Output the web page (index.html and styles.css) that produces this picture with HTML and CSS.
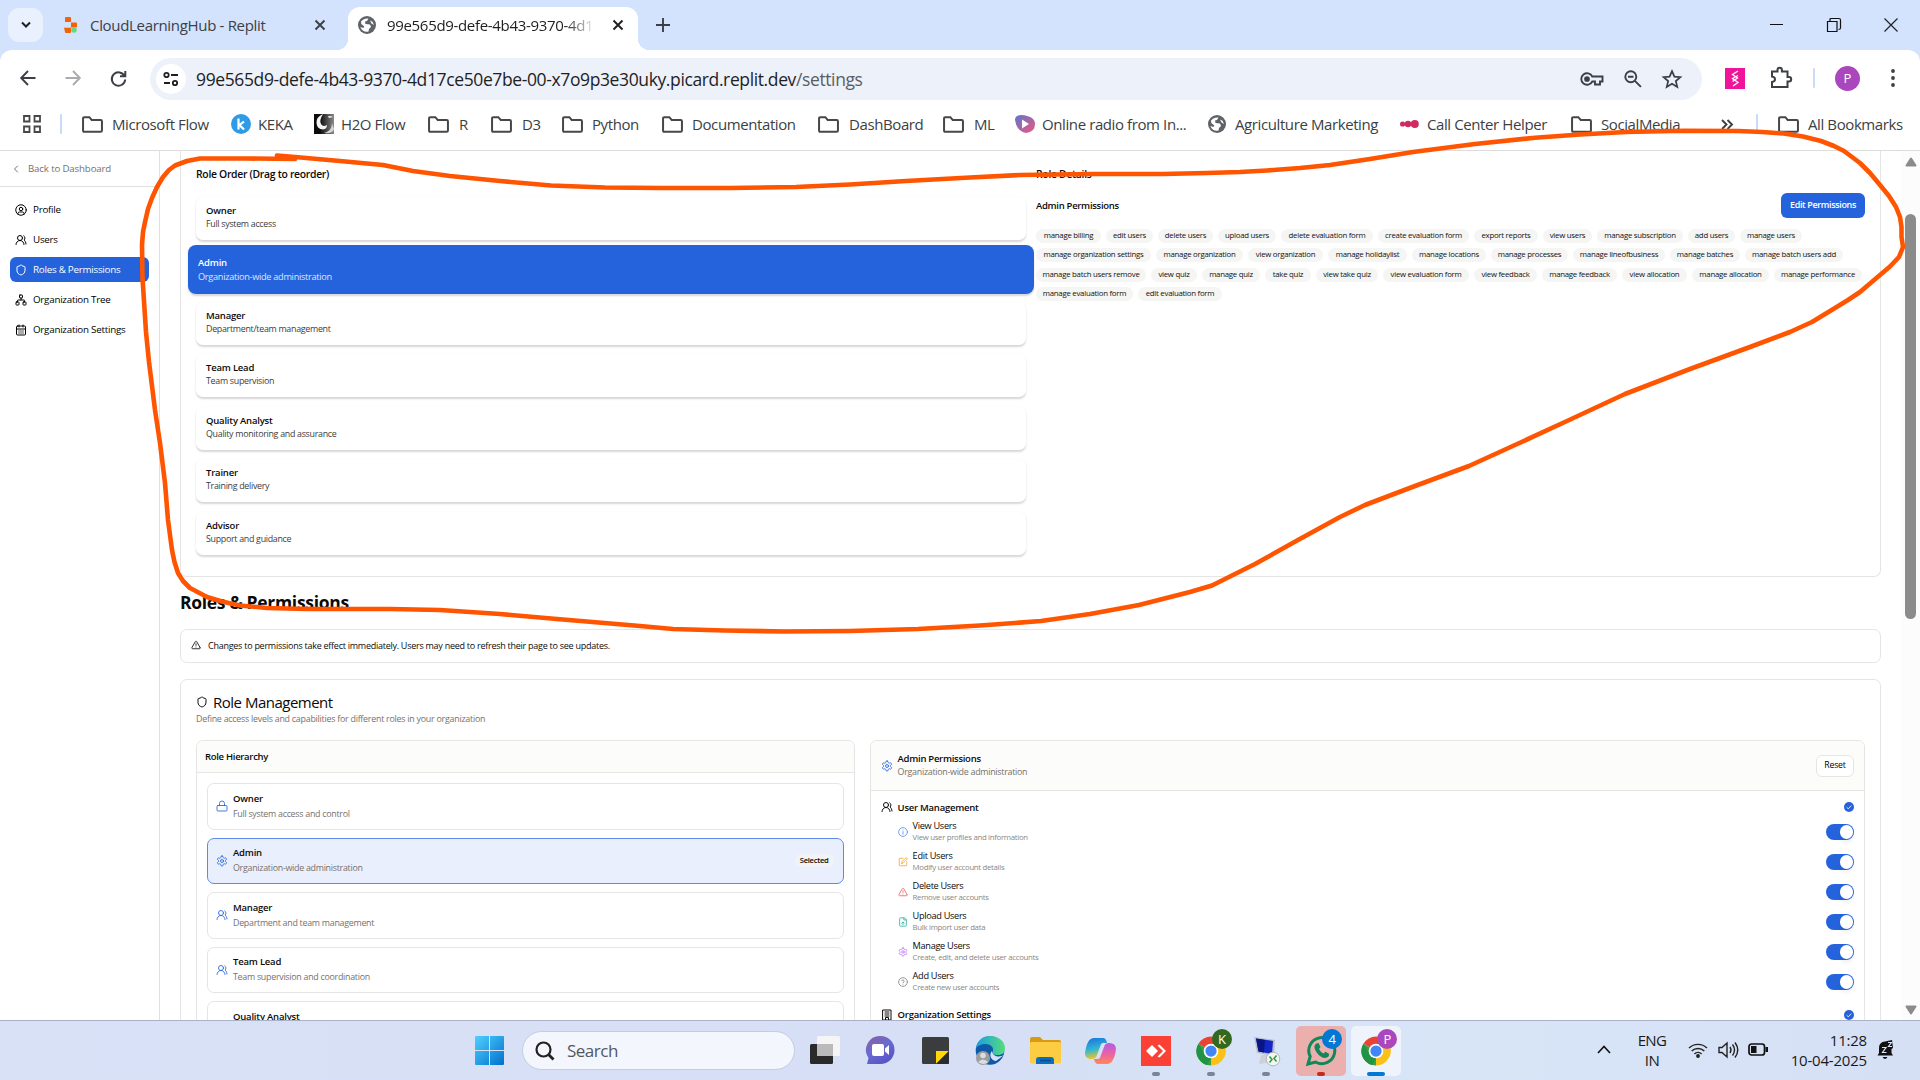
FILE: index.html
```html
<!DOCTYPE html>
<html lang="en">
<head>
<meta charset="utf-8">
<title>Settings</title>
<link rel="stylesheet" href="styles.css">
</head>
<body>
<svg class="defs" aria-hidden="true">
  <defs>
    <symbol id="folder" viewBox="0 0 20 16"><path d="M1 2.2Q1 1 2.2 1H7l2.2 2.6h8.6q1.200 0 1.200 1.200v9q0 1.200-1.200 1.200H2.200Q1 15 1 13.800z" fill="none" stroke="#474747" stroke-width="1.900"/></symbol>
    <symbol id="globe" viewBox="0 0 18 18"><circle cx="9" cy="9" r="9" fill="#5f6368"/><path d="M3 5.500C5 3 8 2 10.500 2.500L9 5l-2 .5L7.500 8 12 8.500l1 2.500-2 2-.5 2.500C7 16.500 3.500 14.500 2.300 11l3 1 1-1.500-3-2.500zM12 4.500l2.500 1.200L16 9l-2.500-1.500z" fill="#fff"/></symbol>
    <symbol id="x" viewBox="0 0 12 12"><path d="M1.500 1.500l9 9m0-9l-9 9" stroke="currentColor" stroke-width="1.900" fill="none"/></symbol>
    <symbol id="users" viewBox="0 0 24 24"><path d="M18 21a8 8 0 0 0-16 0"/><circle cx="10" cy="8" r="5"/><path d="M22 20c0-3.370-2-6.500-4-8a5 5 0 0 0-.45-8.300"/></symbol>
    <symbol id="shield" viewBox="0 0 24 24"><path d="M20 13c0 5-3.500 7.500-7.660 8.950a1 1 0 0 1-.67-.01C7.500 20.500 4 18 4 13V6a1 1 0 0 1 1-1c2 0 4.500-1.200 6.240-2.720a1.170 1.170 0 0 1 1.520 0C14.510 3.810 17 5 19 5a1 1 0 0 1 1 1z"/></symbol>
    <symbol id="gear" viewBox="0 0 24 24"><path d="M12.220 2h-.44a2 2 0 0 0-2 2v.18a2 2 0 0 1-1 1.730l-.43.25a2 2 0 0 1-2 0l-.15-.08a2 2 0 0 0-2.730.73l-.22.38a2 2 0 0 0 .73 2.730l.15.1a2 2 0 0 1 1 1.720v.51a2 2 0 0 1-1 1.740l-.15.09a2 2 0 0 0-.73 2.730l.22.38a2 2 0 0 0 2.730.73l.15-.08a2 2 0 0 1 2 0l.43.25a2 2 0 0 1 1 1.730V20a2 2 0 0 0 2 2h.44a2 2 0 0 0 2-2v-.18a2 2 0 0 1 1-1.730l.43-.25a2 2 0 0 1 2 0l.15.08a2 2 0 0 0 2.730-.73l.22-.39a2 2 0 0 0-.73-2.730l-.15-.08a2 2 0 0 1-1-1.740v-.5a2 2 0 0 1 1-1.740l.15-.09a2 2 0 0 0 .73-2.730l-.22-.38a2 2 0 0 0-2.730-.73l-.15.08a2 2 0 0 1-2 0l-.43-.25a2 2 0 0 1-1-1.730V4a2 2 0 0 0-2-2z"/><circle cx="12" cy="12" r="3"/></symbol>
    <symbol id="warn" viewBox="0 0 24 24"><path d="m21.730 18-8-14a2 2 0 0 0-3.480 0l-8 14A2 2 0 0 0 4 21h16a2 2 0 0 0 1.730-3M12 9v4M12 17h.01"/></symbol>
    <symbol id="check" viewBox="0 0 10 10"><circle cx="5" cy="5" r="5" fill="#2563dc"/><path d="M2.700 5.300l1.600 1.500 3-3.200" fill="none" stroke="#fff" stroke-width=".8"/></symbol>
    <symbol id="chrome" viewBox="0 0 32 32"><path d="M16 16L2.600 8.200A15.500 15.500 0 0 1 29.400 8.200z" fill="#ea4335"/><path d="M16 16L29.400 8.200A15.500 15.500 0 0 1 16 31.500z" fill="#fbc116"/><path d="M16 16V31.500A15.500 15.500 0 0 1 2.600 8.200z" fill="#34a047"/><path d="M16 8.500h13.600a15.500 15.500 0 0 1 0 15L23 16z" fill="#fbc116"/><path d="M2.600 8.200L9.500 20l6.500 3.500-4.500 7.500A15.500 15.500 0 0 1 2.600 8.200z" fill="#229342"/><circle cx="16" cy="16" r="7.800" fill="#fff"/><circle cx="16" cy="16" r="6" fill="#4285f4"/></symbol>
  </defs>
</svg>

<header class="tabstrip">
  <button class="tab-menu"><svg width="10" height="8" viewBox="0 0 10 8"><path d="M1 1.500l4 4 4-4" fill="none" stroke="#1f1f1f" stroke-width="2"/></svg></button>
  <div class="tab">
    <svg width="14" height="16" viewBox="0 0 14 16"><path d="M1 1q0-1 1-1h4q1 0 1 1v4.500H1zM7 5.500h5q1 0 1 1v3q0 1-1 1H7zM0 10.500h7V15q0 1-1 1H2q-1 0-1-1z" fill="#f26207"/><path d="M7 5v5.500H.5V5z" fill="#d3e2fd"/><circle cx="10" cy="13" r="2.800" fill="#68d97f"/></svg>
    <span class="tab-title">CloudLearningHub - Replit</span>
    <svg class="tab-close" width="12" height="12"><use href="#x"/></svg>
  </div>
  <div class="tab active">
    <svg width="18" height="18"><use href="#globe"/></svg>
    <span class="tab-title fade">99e565d9-defe-4b43-9370-4d1</span>
    <svg class="tab-close" width="12" height="12"><use href="#x"/></svg>
  </div>
  <svg class="new-tab" width="14" height="14" viewBox="0 0 14 14"><path d="M7 0v14M0 7h14" stroke="#3c3f44" stroke-width="1.900"/></svg>
  <div class="win-controls">
    <svg width="14" height="14" viewBox="0 0 14 14"><path d="M0 6.500h13" stroke="#111"/></svg>
    <svg width="14" height="14" viewBox="0 0 14 14"><path d="M.5 3.500h9.500v10H.5zM3 3.500V1.500q0-1 1-1h8q1.500 0 1.500 1.500v8q0 1.500-2 1.500" fill="none" stroke="#111" stroke-width="1.200"/></svg>
    <svg width="14" height="14" viewBox="0 0 14 14"><path d="M.5.5l13 13m0-13l-13 13" stroke="#222" stroke-width="1.200"/></svg>
  </div>
</header>

<div class="toolbar-wrap"><div class="toolbar">
  <svg class="back" width="16" height="16" viewBox="0 0 16 16"><path d="M15.500 8H1.500M8 1L1.200 8 8 15" fill="none" stroke="#3c3f44" stroke-width="1.900"/></svg>
  <svg class="forward" width="16" height="16" viewBox="0 0 16 16"><path d="M.5 8h14M8 1l6.800 7L8 15" fill="none" stroke="#a9abae" stroke-width="1.900"/></svg>
  <svg class="reload" width="17" height="17" viewBox="0 0 17 17"><path d="M14.500 6A6.700 6.700 0 1 0 15.200 9.500M15.300 1v5.300H10" fill="none" stroke="#3c3f44" stroke-width="2"/></svg>
  <div class="omnibox">
    <span class="site-info"><svg width="16" height="16" viewBox="0 0 16 16" fill="none" stroke="#1f1f1f" stroke-width="1.800"><circle cx="3.500" cy="4" r="2.200"/><path d="M8 4h7M1 12h6"/><circle cx="12" cy="12" r="2.200"/></svg></span>
    <span class="url">99e565d9-defe-4b43-9370-4d17ce50e7be-00-x7o9p3e30uky.picard.replit.dev<i>/settings</i></span>
    <span class="omni-icons">
      <svg width="24" height="16" viewBox="0 0 24 16" fill="none" stroke="#3c3f44" stroke-width="1.900"><path d="M12.300 5.500A5.800 5.800 0 1 0 12.300 10.500H15v3h5v-3h2.500v-5z"/><circle cx="7" cy="8" r="1.900" fill="#3c3f44"/></svg>
      <svg width="18" height="18" viewBox="0 0 18 18" fill="none" stroke="#3c3f44" stroke-width="1.900"><circle cx="6.800" cy="6.800" r="5.500"/><path d="M10.900 10.900l6 6M4 6.800h5.500"/></svg>
      <svg width="20" height="20" viewBox="0 0 24 24" fill="none" stroke="#3c3f44" stroke-width="2.100"><path d="M12 2.500l2.900 6.700 7.100.6-5.400 4.700 1.700 7-6.300-3.800-6.300 3.800 1.700-7L2 9.800l7.100-.6z"/></svg>
    </span>
  </div>
  <svg class="ext" width="20" height="21" viewBox="0 0 20 21"><path fill="#f0149b" d="M0 0h20v21H0z"/><path d="M13 3L7.500 6.500l5 3.500-5 3.500M13 7.500l-5.500 3 5.500 4-5 3.500" fill="none" stroke="#fff" stroke-width="1.300"/></svg>
  <svg class="puzzle" width="22" height="22" viewBox="0 0 22 22"><path d="M2 4.500h5.500V3a2.200 2.200 0 0 1 4.400 0v1.500h5.600v5.600H19a2.200 2.200 0 0 1 0 4.400h-1.500V20H2v-5q3-.3 3-2.700T2 9.500z" fill="none" stroke="#3c3f44" stroke-width="2"/></svg>
  <i class="sep"></i>
  <span class="avatar">P</span>
  <svg class="dots" width="4" height="20" viewBox="0 0 4 20" fill="#3c3f44"><circle cx="2" cy="3" r="1.900"/><circle cx="2" cy="10" r="1.900"/><circle cx="2" cy="17" r="1.900"/></svg>
</div></div>

<nav class="bookmarks">
  <svg width="18" height="18" viewBox="0 0 18 18" fill="none" stroke="#474747" stroke-width="1.800"><path d="M1 1h5.500v5.500H1zM11.500 1H17v5.500h-5.500zM1 11.500h5.500V17H1zM11.500 11.500H17V17h-5.500z"/></svg>
  <i class="sep"></i>
  <svg width="21" height="17"><use href="#folder"/></svg><span>Microsoft Flow</span>
  <svg width="20" height="20" viewBox="0 0 20 20"><circle cx="10" cy="10" r="10" fill="#2f9be6"/><path d="M7.500 4.500v11M13 7.500L8.500 11l4.500 4.500" fill="none" stroke="#fff" stroke-width="2.200"/></svg><span>KEKA</span>
  <svg width="20" height="20" viewBox="0 0 20 20"><defs><linearGradient id="h2o"><stop offset=".3" stop-color="#0c0c0c"/><stop offset="1" stop-color="#8a8a8a"/></linearGradient></defs><path fill="url(#h2o)" d="M0 0h20v20H0z"/><path d="M9 0Q2 3 2.500 9T9 15.500Q13 15 13 11q-4 2.500-6-1T9 0zM14 2q4 0 5 1l-4 1z" fill="#f4f4f4"/><path d="M18 9q0 8-8 10 9 1 10-4z" fill="#d5d5d5"/></svg><span>H2O Flow</span>
  <svg width="21" height="17"><use href="#folder"/></svg><span>R</span>
  <svg width="21" height="17"><use href="#folder"/></svg><span>D3</span>
  <svg width="21" height="17"><use href="#folder"/></svg><span>Python</span>
  <svg width="21" height="17"><use href="#folder"/></svg><span>Documentation</span>
  <svg width="21" height="17"><use href="#folder"/></svg><span>DashBoard</span>
  <svg width="21" height="17"><use href="#folder"/></svg><span>ML</span>
  <svg width="20" height="18" viewBox="0 0 20 18"><defs><linearGradient id="rad" x2="1" y2="1"><stop offset="0" stop-color="#5b78cf"/><stop offset="1" stop-color="#f2557a"/></linearGradient></defs><path d="M0 5Q0 0 6 0q14 1 14 9t-9 9Q2 17 0 5z" fill="url(#rad)"/><path d="M7 4.500l7 4.500-7 4.500z" fill="#fff"/></svg><span>Online radio from In...</span>
  <svg width="18" height="18"><use href="#globe"/></svg><span>Agriculture Marketing</span>
  <svg width="19" height="8" viewBox="0 0 19 8" fill="#d02a62"><circle cx="2.600" cy="4" r="2.600"/><circle cx="8" cy="4" r="3.200"/><circle cx="14.800" cy="4" r="4"/></svg><span>Call Center Helper</span>
  <svg width="21" height="17"><use href="#folder"/></svg><span>SocialMedia</span>
  <svg width="12" height="11" viewBox="0 0 12 11"><path d="M1 1l4.500 4.500L1 10M6.500 1L11 5.500 6.500 10" fill="none" stroke="#3c3f44" stroke-width="1.900"/></svg>
  <i class="sep"></i>
  <svg width="21" height="17"><use href="#folder"/></svg><span>All Bookmarks</span>
</nav>

<div class="page">
  <aside class="sidebar">
    <a class="back-link"><svg class="ic" viewBox="0 0 24 24"><path d="m15 18-6-6 6-6"/></svg>Back to Dashboard</a>
    <ul>
      <li><svg class="ic" viewBox="0 0 24 24"><circle cx="12" cy="12" r="10.500"/><circle cx="12" cy="10" r="3.500"/><path d="M6 20.500v-1.500a3 3 0 0 1 3-3h6a3 3 0 0 1 3 3v1.500"/></svg>Profile</li>
      <li><svg class="ic"><use href="#users"/></svg>Users</li>
      <li class="on"><svg class="ic"><use href="#shield"/></svg>Roles &amp; Permissions</li>
      <li><svg class="ic" viewBox="0 0 24 24"><rect x="16" y="16" width="6" height="6" rx="1"/><rect x="2" y="16" width="6" height="6" rx="1"/><rect x="9" y="2" width="6" height="6" rx="1"/><path d="M5 16v-3a1 1 0 0 1 1-1h12a1 1 0 0 1 1 1v3M12 12V8"/></svg>Organization Tree</li>
      <li><svg class="ic" viewBox="0 0 24 24"><rect x="3" y="4" width="18" height="18" rx="2"/><path d="M16 2v4M3 10h18M8 2v4M7.500 14h1M11.500 14h1M15.500 14h1M7.500 18h1M11.500 18h1M15.500 18h1"/></svg>Organization Settings</li>
    </ul>
  </aside>

  <main>
    <section class="card order-card">
      <div class="order">
        <h3>Role Order (Drag to reorder)</h3>
        <div class="role"><b>Owner</b><span>Full system access</span></div>
        <div class="role on"><b>Admin</b><span>Organization-wide administration</span></div>
        <div class="role"><b>Manager</b><span>Department/team management</span></div>
        <div class="role"><b>Team Lead</b><span>Team supervision</span></div>
        <div class="role"><b>Quality Analyst</b><span>Quality monitoring and assurance</span></div>
        <div class="role"><b>Trainer</b><span>Training delivery</span></div>
        <div class="role"><b>Advisor</b><span>Support and guidance</span></div>
      </div>
      <div class="details">
        <h3>Role Details</h3>
        <div class="details-head"><h4>Admin Permissions</h4><button class="primary">Edit Permissions</button></div>
        <div class="chips"><i class="w65">manage billing</i><i class="w47">edit users</i><i class="w55">delete users</i><i class="w58">upload users</i><i class="w92">delete evaluation form</i><i class="w91">create evaluation form</i><i class="w64">export reports</i><i class="w49">view users</i><i class="w86">manage subscription</i><i class="w47">add users</i><i class="w62">manage users</i></div>
        <div class="chips"><i class="w115">manage organization settings</i><i class="w87">manage organization</i><i class="w75">view organization</i><i class="w79">manage holidaylist</i><i class="w74">manage locations</i><i class="w77">manage processes</i><i class="w92">manage lineofbusiness</i><i class="w70">manage batches</i><i class="w98">manage batch users add</i></div>
        <div class="chips"><i class="w110">manage batch users remove</i><i class="w46">view quiz</i><i class="w58">manage quiz</i><i class="w46">take quiz</i><i class="w62">view take quiz</i><i class="w86">view evaluation form</i><i class="w63">view feedback</i><i class="w75">manage feedback</i><i class="w65">view allocation</i><i class="w77">manage allocation</i><i class="w88">manage performance</i></div>
        <div class="chips"><i class="w97">manage evaluation form</i><i class="w84">edit evaluation form</i></div>
      </div>
    </section>

    <h1>Roles &amp; Permissions</h1>

    <div class="card alert"><svg class="ic" width="11" height="11"><use href="#warn"/></svg>Changes to permissions take effect immediately. Users may need to refresh their page to see updates.</div>

    <section class="card manage">
      <h2><svg class="ic"><use href="#shield"/></svg>Role Management</h2>
      <p class="desc">Define access levels and capabilities for different roles in your organization</p>
      <div class="panels">
        <div class="panel hierarchy">
          <div class="panel-head">Role Hierarchy</div>
          <div class="levels">
            <div class="level"><svg class="ic" viewBox="0 0 24 24"><rect x="2" y="11" width="20" height="11" rx="2"/><path d="M7 11V7a5 5 0 0 1 10 0v4"/></svg><div><b>Owner</b><span>Full system access and control</span></div></div>
            <div class="level on"><svg class="ic"><use href="#gear"/></svg><div><b>Admin</b><span>Organization-wide administration</span></div><em>Selected</em></div>
            <div class="level"><svg class="ic"><use href="#users"/></svg><div><b>Manager</b><span>Department and team management</span></div></div>
            <div class="level"><svg class="ic"><use href="#users"/></svg><div><b>Team Lead</b><span>Team supervision and coordination</span></div></div>
            <div class="level last"><b>Quality Analyst</b></div>
          </div>
        </div>
        <div class="panel perms">
          <div class="panel-head"><svg class="ic blue"><use href="#gear"/></svg><div><b>Admin Permissions</b><span>Organization-wide administration</span></div><button class="reset">Reset</button></div>
          <div class="group"><svg class="ic"><use href="#users"/></svg><b>User Management</b><svg class="tick"><use href="#check"/></svg></div>
          <div class="perm"><svg class="ic info" viewBox="0 0 24 24"><circle cx="12" cy="12" r="10.500"/><path d="M12 17v-6M12 7h.01"/></svg><div><b>View Users</b><span>View user profiles and information</span></div><u></u></div>
          <div class="perm"><svg class="ic edit" viewBox="0 0 24 24"><path d="M12 3H5a2 2 0 0 0-2 2v14a2 2 0 0 0 2 2h14a2 2 0 0 0 2-2v-7"/><path d="M18.400 2.600a2 2 0 0 1 3 3l-9 9-4 1 1-4z"/></svg><div><b>Edit Users</b><span>Modify user account details</span></div><u></u></div>
          <div class="perm"><svg class="ic del"><use href="#warn"/></svg><div><b>Delete Users</b><span>Remove user accounts</span></div><u></u></div>
          <div class="perm"><svg class="ic up" viewBox="0 0 24 24"><path d="M15 2H6a2 2 0 0 0-2 2v16a2 2 0 0 0 2 2h12a2 2 0 0 0 2-2V7zM14 2v5h6M12 18v-6M9 15l3-3 3 3"/></svg><div><b>Upload Users</b><span>Bulk import user data</span></div><u></u></div>
          <div class="perm"><svg class="ic mng"><use href="#gear"/></svg><div><b>Manage Users</b><span>Create, edit, and delete user accounts</span></div><u></u></div>
          <div class="perm"><svg class="ic add" viewBox="0 0 24 24"><circle cx="12" cy="12" r="10.500"/><path d="M9 9a3 3 0 0 1 5.800 1c0 2-3 2.500-3 3.500M12 17h.01"/></svg><div><b>Add Users</b><span>Create new user accounts</span></div><u></u></div>
          <div class="group second"><svg class="ic" viewBox="0 0 24 24"><path d="M4 2h16v20H4zM9 22v-5h6v5M8 6h8M8 10h8M8 14h8"/></svg><b>Organization Settings</b><svg class="tick"><use href="#check"/></svg></div>
        </div>
      </div>
    </section>
  </main>

  <div class="scrollbar">
    <svg width="12" height="10" viewBox="0 0 12 10"><path d="M6 1.500l4.500 7h-9z" fill="#8b8b8b" stroke="#8b8b8b" stroke-width="2" stroke-linejoin="round"/></svg>
    <div class="thumb"></div>
    <svg class="down" width="12" height="10" viewBox="0 0 12 10"><path d="M6 8.500l4.500-7h-9z" fill="#8b8b8b" stroke="#8b8b8b" stroke-width="2" stroke-linejoin="round"/></svg>
  </div>
</div>

<footer class="taskbar">
  <svg class="win" width="29" height="29" viewBox="0 0 29 29"><defs><linearGradient id="wg" x2="1" y2="1"><stop offset="0" stop-color="#4fd0fd"/><stop offset="1" stop-color="#0070ce"/></linearGradient></defs><path d="M0 1q0-1 1-1h13v14H0zM15 0h13q1 0 1 1v13H15zM0 15h14v14H1q-1 0-1-1zM15 15h14v13q0 1-1 1H15z" fill="url(#wg)"/></svg>
  <div class="search"><svg width="20" height="20" viewBox="0 0 20 20" fill="none" stroke="#222" stroke-width="2.200"><circle cx="8.500" cy="8.500" r="7"/><path d="M13.500 13.500l5 5" stroke-width="2.800"/></svg>Search</div>
  <div class="apps">
    <span><svg width="30" height="29" viewBox="0 0 30 29"><rect y="8" width="23" height="20" rx="1.500" fill="#292a29"/><rect x="7" width="23" height="20" rx="1.500" fill="#f5f5f5"/><path d="M7 8h16v12H7z" fill="#b9bab9"/></svg></span>
    <span><svg width="29" height="29" viewBox="0 0 29 29"><defs><linearGradient id="tg" x2=".6" y2="1"><stop offset="0" stop-color="#8a5f9e"/><stop offset=".5" stop-color="#6a6ad0"/><stop offset="1" stop-color="#5a55c8"/></linearGradient></defs><path d="M14.500 0a14 14 0 0 1 0 28H1l1.500-6A14 14 0 0 1 14.500 0z" fill="url(#tg)"/><rect x="6" y="8" width="12" height="12" rx="2" fill="#fff"/><path d="M19 12.500L23 9v10l-4-3.500z" fill="#fff"/></svg></span>
    <span><svg width="27" height="27" viewBox="0 0 27 27"><rect width="27" height="27" rx="1.500" fill="#3b3c3d"/><path d="M14 27V14h13z" fill="#ffd60a"/><path d="M14 27l13-13v11.500q0 1.500-1.500 1.500z" fill="#2a2b2c"/></svg></span>
    <span><svg width="30" height="29" viewBox="0 0 30 29"><defs><linearGradient id="eg" x2="1"><stop offset="0" stop-color="#1b9de2"/><stop offset="1" stop-color="#56dd7a"/></linearGradient></defs><circle cx="15" cy="14.500" r="14.300" fill="#0f5aa8"/><path d="M1 13C2 4 8 0 15 0c9 0 15 6 15 12 0 5-3 7-7 7-5 0-6-2-5-4 1-4-3-7-7-7-5 0-9 2-10 5z" fill="url(#eg)"/><path d="M29 19c-3 2-11 3-12-4-3 3-2 9 4 10z" fill="#d8e1f5"/><circle cx="8" cy="22" r="7" fill="#9b9da0"/><circle cx="8" cy="19.500" r="2.800" fill="#ddd"/><path d="M3 26q5-5 10 0-4 4-10 0z" fill="#ddd"/></svg></span>
    <span><svg width="31" height="27" viewBox="0 0 31 27"><path d="M0 2q0-2 2-2h8l3 3H29q2 0 2 2v8H0z" fill="#d99a12"/><rect y="5" width="31" height="21.500" rx="1.500" fill="#fccc43"/><path d="M6 27v-4q0-3 3-3h12q3 0 3 3v4z" fill="#0a6fc2"/><path d="M10 23.500h11" stroke="#074e8c" stroke-width="1.500"/></svg></span>
    <span><svg width="31" height="28" viewBox="0 0 31 28"><defs><linearGradient id="c1" y2="1" x2=".2"><stop offset="0" stop-color="#1572e0"/><stop offset=".6" stop-color="#35b7d0"/><stop offset="1" stop-color="#e8c52c"/></linearGradient><linearGradient id="c2" y2="1" x2="0"><stop offset="0" stop-color="#b45be6"/><stop offset=".6" stop-color="#f0669a"/><stop offset="1" stop-color="#ff8a55"/></linearGradient></defs><path d="M9 1h9q3 0 4 5h-4q-2 0-3 4l-3 8q-1 4-5 4-7 0-7-6Q2 1 9 1z" fill="url(#c1)"/><path d="M22 27h-9q-3 0-4-5h4q2 0 3-4l3-8q1-4 5-4 7 0 7 6-2 15-9 15z" fill="url(#c2)"/></svg></span>
    <span class="run"><svg width="30" height="30" viewBox="0 0 30 30"><path fill="#fb4136" d="M0 0h30v30H0z"/><path d="M11 9l6 6-6 6-6-6z" fill="#fff"/><path d="M16.500 9.500l2-1L25 15l-6.500 6.500-2-1L22 15z" fill="#fff"/></svg></span>
    <span class="run"><svg width="30" height="30"><use href="#chrome"/></svg><i class="badge k">K</i></span>
    <span class="run"><svg width="30" height="30" viewBox="0 0 30 30"><path d="M3 1l21 3-1 16L6 17z" fill="#b9bfca"/><path d="M5 2.500L22 5l-1 13L7.500 15.500z" fill="#1227c4"/><path d="M5 2.500L14 4l-1 12.500-5.500-1z" fill="#0a1585"/><path d="M10 19h8l4 7-14 2z" fill="#cdd1d8"/><circle cx="22" cy="23" r="6.800" fill="#f4f4f4" stroke="#aaa" stroke-width=".8"/><path d="M18.500 20.500l2.500 3-2.500 3M25.500 19.500l-2.500 3 2.500 3" fill="none" stroke="#2e9c3a" stroke-width="1.500"/></svg></span>
    <span class="run wa"><svg width="31" height="31" viewBox="0 0 31 31"><path d="M2 29l2.200-7.500A13 13 0 1 1 9.500 27z" fill="none" stroke="#12875a" stroke-width="3"/><path d="M10.500 8.500l2-.5 2 4-1.500 2q1.500 3 4.500 4.500l2-1.700 3.500 2q.5 4-4 4.200-4-.2-7.500-4.500t-3-7.500q.5-2 2-2.500z" fill="#12875a"/></svg><i class="badge n">4</i></span>
    <span class="run cur"><svg width="30" height="30"><use href="#chrome"/></svg><i class="badge p">P</i></span>
  </div>
  <div class="tray">
    <svg class="caret" width="14" height="9" viewBox="0 0 14 9"><path d="M1 8l6-6.500L13 8" fill="none" stroke="#111" stroke-width="1.600"/></svg>
    <div class="lang">ENG<br>IN</div>
    <svg class="wifi" width="20" height="16" viewBox="0 0 20 16" fill="none" stroke="#222" stroke-width="1.400"><path d="M1 6a13 13 0 0 1 18 0M3.700 9a9 9 0 0 1 12.600 0M6.400 12a5.200 5.200 0 0 1 7.200 0"/><circle cx="10" cy="14" r="1.200" fill="#222"/></svg>
    <svg class="vol" width="21" height="18" viewBox="0 0 21 18" fill="none" stroke="#222" stroke-width="1.400"><path d="M1 6.500h3l5-4.500v14l-5-4.500H1zM12 6q2 3 0 6M14.500 3.500q4 5.500 0 11M17 1.500q5.500 7.500 0 15"/></svg>
    <svg class="bat" width="20" height="13" viewBox="0 0 20 13"><rect x="1" y="1" width="15.500" height="11" rx="2.500" fill="none" stroke="#111" stroke-width="1.700"/><path d="M3 3h5.500v7H3zM17.500 4H20v5h-2.500z" fill="#111"/></svg>
    <div class="clock">11:28<br>10-04-2025</div>
    <svg class="bell" width="17" height="20" viewBox="0 0 17 20"><path d="M2 8q0-6 6-6.500L15 0l1 8-1.500 1v4l1.500 2.500H.5L2 13zM5.500 17h5q-2.500 4-5 0z" fill="#111"/><path d="M5 7.500h4L5.500 12.500H9.500M11 2.500h3.500L11.500 6.500H15" fill="none" stroke="#d8e1f5" stroke-width="1.200"/></svg>
  </div>
</footer>

<svg class="scribble" viewBox="0 0 1920 1080"><path d="M277 155.500L295 157 340 161 383 165 413 171 450 176 500 181 551 185.500 605 187.500 661 188 730 188 796 187 850 184.500 906 181 970 177.500 1020 175 1092 174 1163 174 1207 173 1240 172 1267 170.500 1300 168 1330 165 1370 159 1413 152 1475 144 1535 137.700 1580 134.500 1626 132 1684 130.700 1738 131 1762 132 1784 133.500 1803 136.500 1821 141 1834 146 1844 151 1860 163 1870 173 1880 185 1889 196 1896 207 1900 217 1901.500 227 1901.500 237 1903 247 1899 257 1890 266.500 1880 275 1860 292 1848 300 1835 308 1812 322 1790 332 1750 347 1690 369 1625 394 1567 421 1515 445 1469 466 1415 486 1365 505 1340 517 1298 540 1255 564 1212 585.500 1190 592 1139 605 1090 614 1041 621 980 625.500 918 629 850 631 784 631.500 725 630.500 673 629 640 626 557 619 500 614 440 610 390 609 307 609 267 608 240 605.500 222 601.500 207 597 190 588 183 581 178 573 174.500 562 172 550 170 535 168 520 165 483 160 443 155 410 152.500 390 149 362 146 332 142.500 278 142 245 143 232 145 222 148 209 152 198 157 187 163 177 169 170 175 165.500 187 161 200 158.500 247 158.500 295 159"/></svg>
</body>
</html>
```
FILE: styles.css
```css
* { box-sizing: border-box; }
body { margin: 0; width: 1920px; height: 1080px; overflow: hidden; display: flex; flex-direction: column; position: relative; background: #fff; font-family: "Open Sans", "Liberation Sans", sans-serif; color: #0c0a09; }
svg { display: block; flex: none; overflow: visible; }
h1, h2, h3, h4, p, ul { margin: 0; padding: 0; list-style: none; }
i, em { font-style: normal; }
button { font-family: inherit; border: 0; padding: 0; }
.defs { position: absolute; width: 0; height: 0; }
.scribble { position: absolute; inset: 0; width: 1920px; height: 1080px; fill: none; stroke: #ff5500; stroke-width: 4.600; stroke-linecap: round; stroke-linejoin: round; }

/* browser chrome */
.tabstrip { height: 50px; flex: none; background: #d3e2fd; display: flex; align-items: center; padding-left: 8px; }
.tab-menu { width: 35px; height: 34px; border-radius: 11px; background: #e9f0fe; display: grid; place-items: center; }
.tab { width: 284px; margin-left: 21px; display: flex; align-items: center; font-size: 15px; letter-spacing: -.32px; color: #3c3f44; }
.tab-title { width: 207px; margin-left: 12px; white-space: nowrap; }
.tab .tab-close { margin-left: 17px; }
.tab.active { width: 290px; height: 43px; align-self: flex-end; margin: 0; padding: 0 0 7px 10px; background: #fff; border-radius: 12px 12px 0 0; color: #1f1f1f; position: relative; }
.tab.active::before, .tab.active::after { content: ""; position: absolute; bottom: 0; width: 12px; height: 12px; }
.tab.active::before { left: -12px; background: radial-gradient(circle at 0 0, transparent 12px, #fff 12.500px); }
.tab.active::after { right: -12px; background: radial-gradient(circle at 100% 0, transparent 12px, #fff 12.500px); }
.tab.active .tab-title { margin-left: 11px; }
.tab.active .tab-close { margin-left: 18px; }
.tab-title.fade { -webkit-mask-image: linear-gradient(90deg, #000 86%, rgba(0,0,0,.2) 98%); mask-image: linear-gradient(90deg, #000 86%, rgba(0,0,0,.2) 98%); }
.new-tab { margin-left: 18px; }
.win-controls { margin-left: auto; padding-right: 22px; display: flex; gap: 43px; }
.toolbar-wrap { background: #d3e2fd; height: 53px; flex: none; }
.toolbar { height: 53px; background: #fff; border-radius: 12px 12px 0 0; display: flex; align-items: center; padding: 3px 25px 0 20px; }
.forward { margin-left: 29px; }
.reload { margin-left: 29px; }
.omnibox { margin: 5px 0 0 23px; align-self: flex-start; width: 1552px; height: 42px; border-radius: 21px; background: #ecf1fa; display: flex; align-items: center; padding: 0 20px 0 6px; }
.site-info { width: 30px; height: 30px; border-radius: 50%; background: #fff; display: grid; place-items: center; }
.url { margin-left: 10px; font-size: 17.500px; letter-spacing: -.38px; color: #1f1f1f; white-space: nowrap; }
.url i { color: #5a5d62; }
.omni-icons { margin-left: auto; display: flex; align-items: center; gap: 20px; }
.ext { margin-left: 23px; }
.puzzle { margin-left: 25px; }
.sep { width: 2px; height: 20px; background: #c9dbfb; border-radius: 1px; }
.toolbar .sep { margin-left: 21px; }
.avatar { width: 25px; height: 25px; border-radius: 50%; background: #ab47bc; color: #fff; font-size: 13px; display: grid; place-items: center; margin-left: 20px; }
.dots { margin-left: auto; }
.bookmarks { height: 47px; flex: none; background: #fff; display: grid; align-items: center; padding: 0 0 5px 23px; font-size: 15px; letter-spacing: -.4px; color: #3c3f44; white-space: nowrap;
  grid-template-columns: 37px 22px 30px 119px 27px 56px 27px 87px 31px 32px 31px 40px 30px 70px 30px 126px 31px 94px 31px 41px 27px 166px 27px 165px 27px 144px 30px 120px 35px 22px 30px 1fr; }

/* settings page */
.page { flex: 1; min-height: 0; display: flex; border-top: 1px solid #dcdcdc; overflow: hidden; font-size: 9.500px; letter-spacing: -.25px; }
.ic { width: 12px; height: 12px; fill: none; stroke: currentColor; stroke-width: 2; stroke-linecap: round; stroke-linejoin: round; }
.page b { font-weight: 600; }
.sidebar { width: 160px; flex: none; border-right: 1px solid #e0e0e0; }
.back-link { height: 36px; display: flex; align-items: center; gap: 6px; padding-left: 10px; border-bottom: 1px solid #e0e0e0; color: #78716c; font-size: 9.700px; letter-spacing: -.15px; }
.sidebar ul { padding: 10px 10px 0; display: flex; flex-direction: column; gap: 5px; font-weight: 500; font-size: 9.800px; }
.sidebar li { height: 25px; display: flex; align-items: center; gap: 6px; padding-left: 5px; border-radius: 6px; white-space: nowrap; color: #000; }
.sidebar li.on { background: #2563dc; color: #fff; }
main { width: 1701px; margin-left: 20px; flex: none; display: flex; flex-direction: column; }
.card { border: 1px solid #e7e5e4; border-radius: 7px; background: #fff; flex: none; }
.order-card { border-top: 0; border-radius: 0 0 7px 7px; height: 426px; padding: 16px 15px 0; display: flex; gap: 10px; }
.order { width: 830px; }
h3 { font-size: 10.400px; line-height: 14px; font-weight: 600; letter-spacing: -.3px; margin-bottom: 16px; }
.role { height: 43px; margin-bottom: 9.500px; border-radius: 7px; padding: 7px 10px; display: flex; flex-direction: column; box-shadow: 0 1.500px 2px rgba(0,0,0,.16); }
.role b { line-height: 13px; font-size: 9.500px; letter-spacing: -.2px; }
.role span { line-height: 14px; font-size: 8.900px; letter-spacing: -.3px; color: #3c3c3c; }
.role.on { height: 49px; margin: -5px -8px 8px; padding: 11px 10px; background: #2563dc; color: #fff; border-radius: 8px; }
.role.on span { color: #dbe6fb; line-height: 16px; font-size: 9.200px; }
.details { flex: 1; }
.details h3 { margin-bottom: 11px; }
.details-head { display: flex; justify-content: space-between; align-items: center; height: 27px; margin-bottom: 9.500px; }
h4 { font-size: 9.500px; font-weight: 600; letter-spacing: -.3px; }
.primary { width: 84px; height: 25px; border-radius: 6px; background: #2563dc; color: #fff; font-size: 9px; font-weight: 600; letter-spacing: -.35px; padding-bottom: 2px; }
.chips { display: flex; gap: 5px; margin-bottom: 5.500px; }
.chips i { height: 14px; line-height: 13px; border-radius: 7px; background: #f5f5f4; text-align: center; white-space: nowrap; font-size: 7.800px; font-weight: 500; letter-spacing: -.25px; color: #111; }
.w46 { width: 46px; } .w47 { width: 47px; } .w49 { width: 49px; } .w55 { width: 55px; } .w58 { width: 58px; } .w62 { width: 62px; } .w63 { width: 63px; } .w64 { width: 64px; } .w65 { width: 65px; } .w70 { width: 70px; } .w74 { width: 74px; } .w75 { width: 75px; } .w77 { width: 77px; } .w79 { width: 79px; } .w84 { width: 84px; } .w86 { width: 86px; } .w87 { width: 87px; } .w88 { width: 88px; } .w91 { width: 91px; } .w92 { width: 92px; } .w97 { width: 97px; } .w98 { width: 98px; } .w110 { width: 110px; } .w115 { width: 115px; }
h1 { font-size: 17.500px; line-height: 24px; font-weight: 700; letter-spacing: -.300px; margin: 13px 0 15px; }
.alert { height: 34px; display: flex; align-items: center; gap: 7px; padding: 0 0 2px 10px; font-size: 9px; letter-spacing: -.26px; }
.alert .ic { width: 10px; height: 10px; }
.manage { margin-top: 16px; height: 500px; padding: 13px 15px 0; }
h2 { display: flex; align-items: center; gap: 5px; font-size: 15px; line-height: 18px; font-weight: 500; letter-spacing: -.500px; }
.desc { font-size: 8.900px; letter-spacing: -.25px; line-height: 12px; margin: 2px 0 15px; color: #78716c; }
.panels { display: flex; gap: 15px; }
.panel { border: 1px solid #e7e5e4; border-radius: 7px; height: 400px; overflow: hidden; }
.hierarchy { width: 659px; }
.perms { width: 996px; }
.panel-head { background: #fcfcfb; border-bottom: 1px solid #e7e5e4; }
.hierarchy .panel-head { height: 32px; line-height: 32px; padding-left: 8px; font-weight: 600; letter-spacing: -.3px; }
.levels { padding: 10px; display: flex; flex-direction: column; gap: 8px; }
.level { height: 46.500px; flex: none; border: 1px solid #e7e5e4; border-radius: 7px; display: flex; align-items: center; padding: 0 9px 0 8px; gap: 5px; }
.level.last { align-items: flex-start; padding: 7px 0 0 25px; }
.level div { display: flex; flex-direction: column; }
.level b { line-height: 15px; letter-spacing: -.2px; }
.level span { line-height: 16px; font-size: 8.900px; letter-spacing: -.28px; color: #78716c; }
.level .ic, .ic.blue { color: #2563dc; stroke-width: 1.700; }
.level.on { background: #e9effc; border-color: #5d8ae6; }
.level em { margin-left: auto; font-size: 7.700px; font-weight: 600; line-height: 13px; padding: 0 5px; border-radius: 7px; background: #f2f3f5; letter-spacing: -.3px; }
.perms .panel-head { height: 50px; display: flex; align-items: center; gap: 5px; padding: 0 10px; }
.perms .panel-head div { display: flex; flex-direction: column; line-height: 13px; padding-bottom: 1px; }
.perms .panel-head b { letter-spacing: -.28px; }
.perms .panel-head span { font-size: 8.900px; font-weight: 400; letter-spacing: -.28px; color: #78716c; }
.reset { margin-left: auto; width: 38px; height: 22px; border: 1px solid #e7e5e4; border-radius: 6px; background: #fff; font-size: 8.700px; font-weight: 500; letter-spacing: -.2px; padding-bottom: 2px; }
.group { display: flex; align-items: center; gap: 5px; padding: 0 10px; height: 32px; }
.tick { width: 10px; height: 10px; margin-left: auto; }
.group.second { margin-top: 1.500px; }
.perm { height: 30px; display: flex; align-items: center; gap: 5px; padding: 0 10px 0 27px; }
.group + .perm { margin-top: -6px; }
.perm .ic { width: 10px; height: 10px; stroke-width: 2; }
.perm div { display: flex; flex-direction: column; line-height: 11.500px; padding-bottom: 1px; }
.page .perm b { font-weight: 500; font-size: 9.200px; letter-spacing: -.32px; }
.perm span { font-size: 7.800px; letter-spacing: -.3px; color: #8d8781; }
.perm u { margin-left: auto; width: 28px; height: 15.500px; border-radius: 8px; background: #2563dc; padding: 1px; display: flex; justify-content: flex-end; }
.perm u::after { content: ""; width: 13.500px; height: 13.500px; border-radius: 50%; background: #fff; box-shadow: 0 4px 4px rgba(0,0,0,.06); }
.info { color: #5b8ff0; } .edit { color: #f5a524; } .del { color: #ef6060; } .up { color: #2cb5a0; } .mng { color: #b97af5; } .add { color: #85858a; }
.scrollbar { width: 19px; margin-left: auto; background: #fcfcfc; display: flex; flex-direction: column; align-items: center; padding: 6px 0 5px; }
.thumb { width: 11px; height: 405px; margin-top: 47px; border-radius: 6px; background: #8b8b8b; }
.down { margin-top: auto; }

/* taskbar */
.taskbar { height: 60px; flex: none; border-top: 1px solid #aab1c6; background: linear-gradient(90deg, #d8e1f6, #d6dff5 50%, #d8e5f7 75%, #d6e0f5); display: flex; align-items: center; position: relative; color: #1a1a1a; }
.win { margin-left: 475px; }
.search { margin-left: 18px; width: 273px; height: 39px; border-radius: 20px; background: #f3f6fd; border: 1px solid #c3cce2; display: flex; align-items: center; gap: 12px; padding-left: 12px; font-size: 17px; letter-spacing: -.5px; color: #55585e; }
.apps { display: flex; margin-left: 5px; }
.apps span { width: 50px; height: 50px; margin-right: 5.150px; display: grid; place-items: center; position: relative; border-radius: 5px; }
.run::after { content: ""; position: absolute; bottom: 0; left: 21px; width: 8px; height: 4px; border-radius: 2px; background: #7b8496; }
.apps .wa { background: #ebb0ae; } .wa::after { background: #c42b1c; }
.apps .cur { background: #eff3fc; } .cur::after { left: 16px; width: 18px; background: #0078d4; }
.badge { position: absolute; left: 26px; top: 3px; width: 20px; height: 20px; border-radius: 50%; color: #fff; font-size: 13px; line-height: 20px; text-align: center; }
.badge.k { background: #33691e; } .badge.n { background: #0078d4; } .badge.p { background: #ab47bc; }
.tray { margin-left: auto; display: flex; align-items: center; padding: 0 26px 2px 0; font-size: 15px; line-height: 20px; letter-spacing: -.2px; }
.lang { width: 40px; text-align: center; margin-left: 21px; letter-spacing: -.6px; }
.wifi { margin-left: 16px; } .vol { margin-left: 10px; } .bat { margin-left: 9px; }
.clock { margin-left: 19px; width: 80px; text-align: right; white-space: nowrap; }
.bell { margin-left: 10px; }
```
